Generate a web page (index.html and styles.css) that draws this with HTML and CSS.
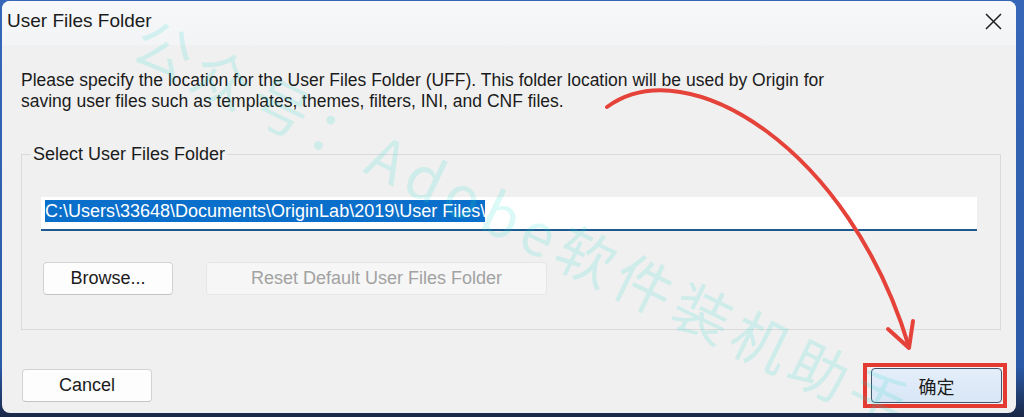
FILE: index.html
```html
<!DOCTYPE html>
<html lang="en">
<head>
    <meta charset="UTF-8">
    <meta name="viewport" content="width=device-width, initial-scale=1.0">
    <title>User Files Folder</title>
    <link rel="stylesheet" href="styles.css">
</head>
<body>
    <div class="window">
        <div class="titlebar">
            <span class="title">User Files Folder</span>
            <button class="close-btn" aria-label="Close">
                <svg width="17" height="17" viewBox="0 0 17 17">
                    <path d="M1 1 L16 16 M16 1 L1 16" stroke="#1f1f1f" stroke-width="1.5" fill="none"/>
                </svg>
            </button>
        </div>

        <p class="intro">Please specify the location for the User Files Folder (UFF). This folder location will be used by Origin for<br>saving user files such as templates, themes, filters, INI, and CNF files.</p>

        <fieldset class="group">
            <legend>Select User Files Folder</legend>
            <div class="path-box"><span class="selected">C:\Users\33648\Documents\OriginLab\2019\User Files\</span></div>
            <div class="group-buttons">
                <button class="btn browse-btn">Browse...</button>
                <button class="btn reset-btn" disabled>Reset Default User Files Folder</button>
            </div>
        </fieldset>

        <div class="footer">
            <button class="btn cancel-btn">Cancel</button>
            <span class="mark"><button class="btn ok-btn">确定</button></span>
        </div>

        <!-- watermark and the red arrow are drawn over the dialog -->
        <div class="watermark">公众号：Adobe软件装机助手</div>
        <svg class="arrow" width="1024" height="417" viewBox="0 0 1024 417">
            <path d="M607 107 C688 48 850 150 909 347" />
            <path d="M888 329 L909 348 L913 321" />
        </svg>
    </div>
</body>
</html>
```

FILE: styles.css
```css
body {
    margin: 0;
    padding: 1px 0 0 2px;
    box-sizing: border-box;
    width: 1024px;
    height: 417px;
    overflow: hidden;
    background: linear-gradient(to bottom, #3566b8 0%, #2b5aa8 88%, #1a2846 100%);
    font-family: "Liberation Sans", Arial, "Noto Sans CJK SC", sans-serif;
    color: #1b1b1b;
}
.window {
    position: relative;
    width: 1014px;
    height: 412px;
    background: #f0f0f0;
    border-radius: 8px;
    overflow: hidden;
}
.titlebar {
    height: 44px;
    display: flex;
    justify-content: space-between;
    align-items: flex-start;
    background: linear-gradient(to bottom, #f7f8fa, #f3f4f6);
}
.title {
    font-size: 19px;
    line-height: 24px;
    padding: 8px 0 0 5px;
}
.close-btn {
    width: 17px;
    height: 17px;
    margin: 12px 14px 0 0;
    padding: 0;
    border: none;
    background: none;
}
.close-btn svg {
    display: block;
}
.intro {
    margin: 25px 0 0 19px;
    font-size: 17.5px;
    line-height: 21px;
    white-space: nowrap;
}
.group {
    margin: 31px 15px 0 19px;
    padding: 0 0 34px 0;
    border: 1px solid #dadada;
    min-width: 0;
}
.group legend {
    margin-left: 9px;
    padding: 0 2px;
    font-size: 18px;
    line-height: 22px;
}
.path-box {
    margin: 32px 23px 0 19px;
    height: 29px;
    padding: 3px 0 0 4px;
    background: #ffffff;
    border-bottom: 2px solid #1f5a8e;
    font-size: 18px;
}
.selected {
    display: inline-block;
    line-height: 22px;
    background: #0a6fcb;
    color: #ffffff;
}
.group-buttons {
    display: flex;
    gap: 33px;
    margin: 31px 0 0 21px;
}
.btn {
    height: 33px;
    padding: 0;
    font-family: inherit;
    font-size: 18px;
    color: #1b1b1b;
    background: #fdfdfd;
    border: 1px solid #d3d3d3;
    border-bottom-color: #c4c4c4;
    border-radius: 4px;
}
.browse-btn {
    width: 130px;
}
.reset-btn {
    width: 341px;
    color: #a2a2a2;
    background: #f6f6f6;
    border-color: #e6e6e6;
}
.footer {
    display: flex;
    justify-content: space-between;
    align-items: center;
    margin-top: 33px;
    padding: 0 9px 0 20px;
}
.cancel-btn {
    width: 130px;
}
.mark {
    display: flex;
    padding: 1px 1px 1px 4px;
    border: 4px solid #e33b31;
}
.ok-btn {
    width: 131px;
    height: 35px;
    font-family: "Noto Sans CJK SC", sans-serif;
    background: linear-gradient(to bottom, #e4eefa, #d8e6f5);
    border: 1px solid #40566f;
}
.watermark {
    position: absolute;
    left: 150px;
    top: 8px;
    transform: rotate(26deg);
    transform-origin: 0 0;
    font-family: "Noto Sans CJK SC", sans-serif;
    font-size: 58px;
    line-height: 1;
    letter-spacing: 7px;
    white-space: nowrap;
    color: rgba(30, 215, 200, 0.16);
    pointer-events: none;
}
.arrow {
    position: absolute;
    left: -2px;
    top: -1px;
    fill: none;
    stroke: #e5423a;
    stroke-width: 4;
    stroke-linecap: round;
    stroke-linejoin: round;
    pointer-events: none;
}
```
